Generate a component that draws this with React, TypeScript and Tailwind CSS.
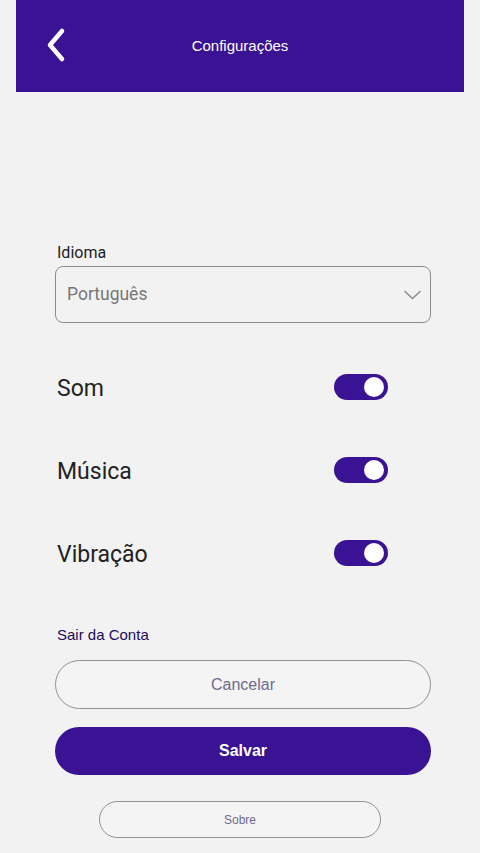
import React from "react";

const Toggle: React.FC = () => (
  <div className="w-[54px] h-[26px] rounded-full bg-[#3a1294] flex items-center justify-end pr-[4px]">
    <div className="w-[20px] h-[20px] rounded-full bg-white" />
  </div>
);

const SettingRow: React.FC<{ label: string; className?: string }> = ({ label, className }) => (
  <div className={"flex items-center justify-between h-[26px] pl-[2px] pr-[43px] " + (className ?? "")}>
    <span className="text-[23px] leading-[26px] pt-[3px] text-[#222] font-['Roboto',sans-serif]">{label}</span>
    <Toggle />
  </div>
);

export default function App() {
  return (
    <div className="min-h-[853px] bg-[#f2f2f2] font-['Liberation_Sans',Arial,sans-serif]">
      <header className="mx-4 h-[92px] bg-[#3a1294] flex items-center relative">
        <button className="ml-[29px] mb-[2px]">
          <svg width="22" height="36" viewBox="0 0 22 36" fill="none">
            <path d="M17 4 L5 18 L17 32" stroke="white" strokeWidth="4.5" strokeLinecap="round" strokeLinejoin="round" />
          </svg>
        </button>
        <h1 className="absolute left-0 right-0 text-center text-white text-[15px] pointer-events-none">
          Configurações
        </h1>
      </header>

      <main className="pl-[55px] pr-[49px] pt-[152px] flex flex-col">
        <label className="text-[16px] leading-[18px] text-[#222] pl-[2px] font-['Roboto',sans-serif]">Idioma</label>
        <div className="mt-[4px] h-[57px] border-[1.5px] border-[#8c8c8c] rounded-[8px] flex items-center justify-between pl-[11px] pr-[9px]">
          <span className="text-[17.5px] text-[#777] font-['Roboto',sans-serif]">Português</span>
          <svg width="17" height="10" viewBox="0 0 17 10" fill="none">
            <path d="M1 1.5 L8.5 8.5 L16 1.5" stroke="#8a8a8a" strokeWidth="1.5" strokeLinecap="round" strokeLinejoin="round" />
          </svg>
        </div>

        <SettingRow label="Som" className="mt-[51px]" />
        <SettingRow label="Música" className="mt-[57px]" />
        <SettingRow label="Vibração" className="mt-[57px]" />

        <a className="mt-[60px] pl-[2px] text-[15px] leading-[17px] text-[#1c0a5c]">Sair da Conta</a>

        <button className="mt-[17px] h-[49px] rounded-full border-[1.5px] border-[#8f8f99] bg-[#f4f4f4] text-[16px] text-[#6e6a8e]">
          Cancelar
        </button>
        <button className="mt-[18px] h-[48px] rounded-full bg-[#3a1294] text-[16px] font-bold text-white">
          Salvar
        </button>
        <button className="mt-[26px] ml-[44px] w-[282px] h-[37px] rounded-full border-[1.5px] border-[#8f8f99] bg-[#f4f4f4] text-[12px] text-[#6e6a8e]">
          Sobre
        </button>
      </main>
    </div>
  );
}
